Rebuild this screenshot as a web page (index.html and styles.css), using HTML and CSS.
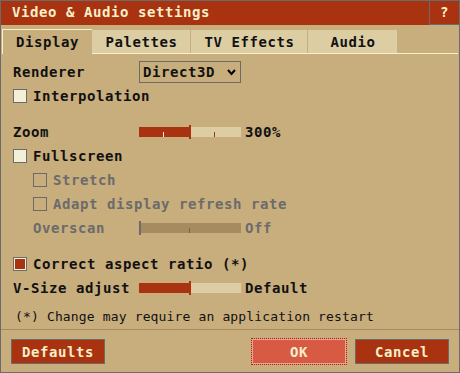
FILE: index.html
```html
<!DOCTYPE html>
<html lang="en">
<head>
  <meta charset="UTF-8" />
  <title>Video &amp; Audio settings</title>
  <link rel="stylesheet" href="styles.css">
</head>
<body>
  <div class="dialog">
    <div class="titlebar">
      <div class="title">Video &amp; Audio settings</div>
      <div class="help">?</div>
    </div>

    <div class="tabs">
      <div class="tab active">Display</div>
      <div class="tab tab-pal">Palettes</div>
      <div class="tab tab-tv">TV Effects</div>
      <div class="tab tab-audio">Audio</div>
      <div class="tab-fill"></div>
    </div>

    <div class="content">
      <div class="row">
        <span class="label">Renderer</span>
        <div class="select">
          <span>Direct3D</span>
          <svg class="chevron" width="9" height="7" viewBox="0 0 9 7"><polyline points="1,1 4.5,5 8,1" fill="none" stroke="#000" stroke-width="2"/></svg>
        </div>
      </div>
      <div class="row">
        <span class="check"></span><span>Interpolation</span>
      </div>

      <div class="row group">
        <span class="label">Zoom</span>
        <div class="slider">
          <div class="fill"></div><div class="knob"></div><div class="rest"></div>
          <span class="tick tick-light" style="left:24px"></span>
          <span class="tick tick-red" style="left:75px"></span>
        </div>
        <span class="value">300%</span>
      </div>
      <div class="row">
        <span class="check"></span><span>Fullscreen</span>
      </div>
      <div class="row sub disabled">
        <span class="check"></span><span>Stretch</span>
      </div>
      <div class="row sub disabled">
        <span class="check"></span><span>Adapt display refresh rate</span>
      </div>
      <div class="row sub disabled">
        <span class="label">Overscan</span>
        <div class="slider off">
          <div class="knob"></div><div class="rest"></div>
          <span class="tick tick-dark" style="left:50px"></span>
        </div>
        <span class="value">Off</span>
      </div>

      <div class="row group">
        <span class="check on"></span><span>Correct aspect ratio (*)</span>
      </div>
      <div class="row">
        <span class="label">V-Size adjust</span>
        <div class="slider">
          <div class="fill"></div><div class="knob"></div><div class="rest"></div>
        </div>
        <span class="value">Default</span>
      </div>
    </div>

    <div class="note">(*) Change may require an application restart</div>

    <div class="buttons">
      <button class="btn">Defaults</button>
      <span class="spacer"></span>
      <button class="btn btn-ok">OK</button>
      <button class="btn">Cancel</button>
    </div>
  </div>
</body>
</html>
```

FILE: styles.css
```css
body {
  margin: 0;
  font-family: "DejaVu Sans Mono", monospace;
  font-weight: bold;
  font-size: 14px;
  letter-spacing: 0.57px;
  color: #111;
}
.dialog {
  width: 460px;
  height: 373px;
  box-sizing: border-box;
  border: 1px solid #6b6b6b;
  background: #c8ad7d;
  display: flex;
  flex-direction: column;
}

/* title bar */
.titlebar {
  display: flex;
  height: 24px;
}
.title {
  flex: 1;
  background: #a93211;
  color: #f8f0c8;
  padding-left: 11px;
  line-height: 23px;
}
.help {
  width: 30px;
  box-sizing: border-box;
  background: #a93211;
  color: #f8f0c8;
  border-left: 1px solid #6b6b6b;
  border-bottom: 1px solid #6b6b6b;
  text-align: center;
  line-height: 23px;
}

/* tabs */
.tabs {
  display: flex;
  align-items: flex-end;
  margin-top: 4px;
  padding-left: 1px;
}
.tab {
  height: 24px;
  box-sizing: border-box;
  line-height: 24px;
  text-align: center;
  background: #dccda3;
  border-bottom: 1px solid #f8f0c8;
  box-shadow: inset -1px 0 0 #c8ad7d;
}
.tab.active {
  width: 90px;
  height: 25px;
  background: #c8ad7d;
  border: 0;
  border-top: 1px solid #f8f0c8;
  border-left: 1px solid #f8f0c8;
  box-shadow: none;
}
.tab-pal { width: 99px; }
.tab-tv { width: 117px; }
.tab-audio { width: 90px; }
.tab-fill {
  flex: 1;
  height: 24px;
  box-sizing: border-box;
  border-bottom: 1px solid #f8f0c8;
  margin-right: 1px;
}

/* content rows */
.content {
  padding: 6px 0 0 12px;
}
.row {
  display: flex;
  align-items: center;
  height: 24px;
}
.row.group { margin-top: 12px; }
.row.sub { padding-left: 20px; }
.disabled { color: #6b6b6b; }
.label { width: 126px; }
.row.sub .label { width: 106px; }

.select {
  width: 102px;
  height: 22px;
  box-sizing: border-box;
  border: 1px solid #6b6b6b;
  display: flex;
  align-items: center;
  justify-content: space-between;
  padding: 0 3px 0 3px;
}
.chevron { margin-right: 1px; }

.check {
  width: 14px;
  height: 14px;
  box-sizing: border-box;
  border: 1px solid #6b6b6b;
  background: #f2f0d6;
  margin-right: 6px;
}
.disabled .check { background: transparent; }
.check.on {
  background: #a93211;
  box-shadow: inset 0 0 0 1px #f2f0d6;
}

/* sliders */
.slider {
  position: relative;
  width: 102px;
  height: 10px;
  display: flex;
  align-items: center;
}
.slider .fill {
  width: 50px;
  height: 10px;
  background: #a93211;
}
.slider .knob {
  width: 2px;
  height: 14px;
  background: #a93211;
}
.slider .rest {
  flex: 1;
  height: 10px;
  background: #dccda3;
}
.slider.off .knob { background: #6b6b6b; }
.slider.off .rest { background: #a58b5f; }
.tick {
  position: absolute;
  bottom: 0;
  width: 1px;
  height: 5px;
}
.tick-light { background: #f2f0d6; }
.tick-red { background: #a93211; }
.tick-dark { background: #7a6444; }
.value { margin-left: 4px; }

.note {
  margin-top: 8px;
  padding-left: 14px;
  height: 17px;
  line-height: 17px;
  font-size: 13px;
  font-weight: normal;
  letter-spacing: 0.15px;
  border-bottom: 1px solid #a58b5f;
  padding-bottom: 4px;
}

/* buttons */
.buttons {
  display: flex;
  padding: 9px 10px 0 10px;
}
.spacer { flex: 1; }
.btn {
  width: 94px;
  height: 25px;
  box-sizing: border-box;
  border: 1px solid #6b6b6b;
  background: #a93211;
  color: #f8f0c8;
  font: inherit;
  letter-spacing: inherit;
  padding: 0;
}
.btn-ok {
  background: #d65a44;
  border-color: #eba58e;
  outline: 1px dotted #c0101a;
  margin-right: 9px;
}
```
